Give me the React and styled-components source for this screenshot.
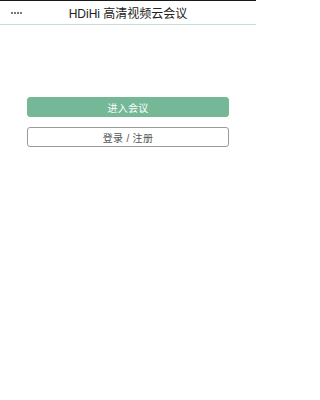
import React from 'react';
import styled, { createGlobalStyle } from 'styled-components';

const GlobalStyle = createGlobalStyle`
  html, body {
    margin: 0;
    padding: 0;
    overflow-x: hidden;
    background: #fff;
    font-family: "Liberation Sans", "Noto Sans CJK SC", sans-serif;
  }
`;

const Page = styled.div`
  width: 256px;
`;

const Header = styled.header`
  position: relative;
  height: 23px;
  border-top: 1px solid #1a1a1a;
  border-bottom: 1px solid #c9ddd5;
  display: flex;
  align-items: center;
  justify-content: center;
`;

const Dots = styled.span`
  position: absolute;
  left: 11px;
  top: 11px;
  display: flex;
  gap: 1.5px;
`;

const Dot = styled.i`
  width: 1.5px;
  height: 1.5px;
  background: #777;
`;

const Title = styled.h1`
  margin: 0;
  font-size: 12px;
  font-weight: normal;
  color: #222;
  white-space: nowrap;
`;

const Main = styled.main`
  padding: 72px 27px 0;
  display: flex;
  flex-direction: column;
  gap: 10px;
`;

const Button = styled.button`
  box-sizing: border-box;
  width: 100%;
  height: 20px;
  flex: none;
  padding: 0;
  border-radius: 3px;
  font-family: inherit;
  font-size: 10px;
  letter-spacing: 0.3px;
  border: 1px solid ${(p) => (p.$primary ? '#74b898' : '#9a9a9a')};
  background: ${(p) => (p.$primary ? '#74b898' : '#fff')};
  color: ${(p) => (p.$primary ? '#fff' : '#555')};
`;

export default function App() {
  return (
    <Page>
      <GlobalStyle />
      <Header>
        <Dots>
          <Dot />
          <Dot />
          <Dot />
          <Dot />
        </Dots>
        <Title>HDiHi 高清视频云会议</Title>
      </Header>
      <Main>
        <Button $primary>进入会议</Button>
        <Button>登录 / 注册</Button>
      </Main>
    </Page>
  );
}
